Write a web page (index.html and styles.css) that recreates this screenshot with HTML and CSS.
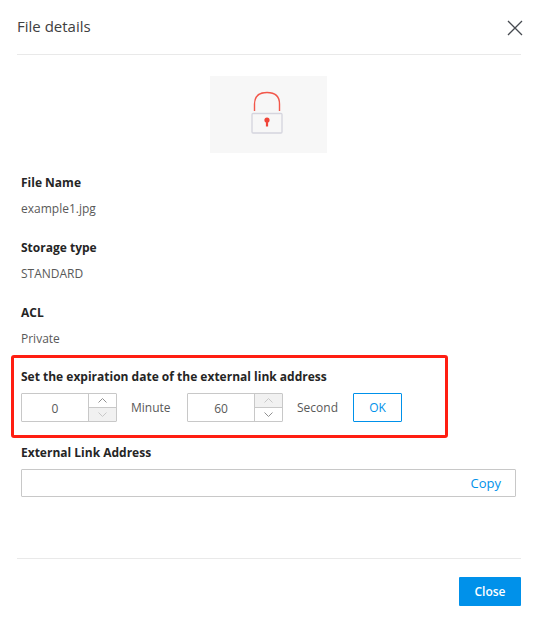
FILE: index.html
```html
<!DOCTYPE html>
<html lang="en">
<head>
  <meta charset="UTF-8">
  <meta name="viewport" content="width=device-width, initial-scale=1.0">
  <title>File details</title>
  <link rel="stylesheet" href="styles.css">
</head>
<body>

  <div class="dialog">
    <header class="dialog-header">
      <h1>File details</h1>
      <button type="button" class="icon-close" aria-label="Close dialog">
        <svg width="16" height="16" viewBox="0 0 16 16" fill="none" stroke="#464a50" stroke-width="1.3">
          <path d="M1 1L15 15M15 1L1 15"/>
        </svg>
      </button>
    </header>

    <main class="dialog-body">
      <div class="preview">
        <svg width="32" height="44" viewBox="0 0 32 44" fill="none">
          <path d="M3.5 20V13C3.5 5.500 8 1.500 16 1.500S28.500 5.500 28.500 13V20" stroke="#f2574a" stroke-width="1.400"/>
          <rect x="1" y="22.500" width="30" height="19.500" rx="1" stroke="#d5d5de" stroke-width="1.300"/>
          <circle cx="16" cy="29" r="2.600" fill="#f04438"/>
          <path d="M16 30V35.500" stroke="#f04438" stroke-width="2.200"/>
        </svg>
      </div>

      <dl class="details">
        <div class="item">
          <dt>File Name</dt>
          <dd>example1.jpg</dd>
        </div>
        <div class="item">
          <dt>Storage type</dt>
          <dd>STANDARD</dd>
        </div>
        <div class="item">
          <dt>ACL</dt>
          <dd>Private</dd>
        </div>
      </dl>

      <form class="expiration">
        <h2>Set the expiration date of the external link address</h2>
        <div class="controls">
          <div class="spinner">
            <input type="text" id="minute" value="0">
            <div class="arrows">
              <button type="button" aria-label="More minutes">
                <svg width="9" height="5" viewBox="0 0 9 5"><path d="M0.500 4.500L4.500 0.500L8.500 4.500"/></svg>
              </button>
              <button type="button" aria-label="Fewer minutes" disabled>
                <svg width="9" height="5" viewBox="0 0 9 5"><path d="M0.500 0.500L4.500 4.500L8.500 0.500"/></svg>
              </button>
            </div>
          </div>
          <label for="minute">Minute</label>
          <div class="spinner">
            <input type="text" id="second" value="60">
            <div class="arrows">
              <button type="button" aria-label="More seconds" disabled>
                <svg width="9" height="5" viewBox="0 0 9 5"><path d="M0.500 4.500L4.500 0.500L8.500 4.500"/></svg>
              </button>
              <button type="button" aria-label="Fewer seconds">
                <svg width="9" height="5" viewBox="0 0 9 5"><path d="M0.500 0.500L4.500 4.500L8.500 0.500"/></svg>
              </button>
            </div>
          </div>
          <label for="second">Second</label>
          <button type="button" class="btn-ok">OK</button>
        </div>
      </form>

      <div class="link-address">
        <label for="link">External Link Address</label>
        <div class="link-box">
          <input type="text" id="link">
          <button type="button" class="btn-copy">Copy</button>
        </div>
      </div>
    </main>

    <footer class="dialog-footer">
      <button type="button" class="btn-close">Close</button>
    </footer>
  </div>

</body>
</html>
```
FILE: styles.css
```css
* {
  margin: 0;
  padding: 0;
  box-sizing: border-box;
}

body {
  font-family: "Open Sans", "Noto Sans", sans-serif;
  font-size: 12px;
  line-height: 26px;
  color: #595959;
  background-color: #fff;
}

button,
input {
  font: inherit;
  color: inherit;
  border: none;
  background: none;
}

button {
  cursor: pointer;
}

.dialog {
  padding: 0 17px;
}

.dialog-header {
  display: flex;
  justify-content: space-between;
  align-items: center;
  height: 55px;
  border-bottom: 1px solid #e9e9e9;
}

h1 {
  padding-bottom: 2px;
  font-size: 15px;
  font-weight: normal;
  color: #404040;
}

.icon-close {
  display: flex;
  margin-right: -2px;
  padding-top: 2px;
}

.dialog-body {
  padding: 21px 5px 61px 4px;
}

.preview {
  display: flex;
  justify-content: center;
  align-items: center;
  width: 117px;
  height: 77px;
  margin: 0 auto 17px;
  padding: 0 4px 4px 0;
  background-color: #f7f7f7;
}

.item {
  margin-bottom: 13px;
}

.item:last-child {
  margin-bottom: 3px;
}

dt,
h2,
.link-address label {
  display: block;
  font-size: 12px;
  font-weight: bold;
  color: #252525;
}

.expiration {
  width: fit-content;
  margin-left: -10px;
  padding: 6px 43px 13px 7px;
  border: 3px solid #ff1e12;
  border-radius: 3px;
}

.controls {
  display: flex;
  align-items: center;
  gap: 14px;
  margin-top: 3px;
}

.controls label {
  min-width: 42px;
}

.spinner {
  display: flex;
  width: 96px;
  height: 29px;
  border: 1px solid #c8c8c8;
  border-radius: 1px;
}

.spinner input {
  flex: 1;
  min-width: 0;
  padding-top: 2px;
  text-align: center;
}

.arrows {
  display: flex;
  flex-direction: column;
  width: 28px;
  border-left: 1px solid #c8c8c8;
}

.arrows button {
  display: flex;
  flex: 1;
  justify-content: center;
  align-items: center;
}

.arrows button + button {
  border-top: 1px solid #c8c8c8;
}

.arrows button:disabled {
  background-color: #f1f1f1;
}

.arrows path {
  fill: none;
  stroke: #909090;
}

.arrows button:disabled path {
  stroke: #c8c8c8;
}

.btn-ok {
  width: 49px;
  height: 29px;
  border: 1px solid #0091ea;
  border-radius: 1px;
  color: #0091ea;
}

.link-address {
  margin-top: 2px;
}

.link-box {
  display: flex;
  height: 28px;
  margin-top: 3px;
  border: 1px solid #c8c8c8;
  border-radius: 1px;
}

.link-box input {
  flex: 1;
  min-width: 0;
  padding-left: 10px;
}

.btn-copy {
  padding: 0 14px;
  font-size: 13px;
  color: #0091ea;
}

.dialog-footer {
  display: flex;
  justify-content: flex-end;
  padding: 18px 0;
  border-top: 1px solid #e9e9e9;
}

.btn-close {
  width: 62px;
  height: 29px;
  border-radius: 1px;
  background-color: #0091ea;
  color: #fff;
  font-weight: 600;
}
```
